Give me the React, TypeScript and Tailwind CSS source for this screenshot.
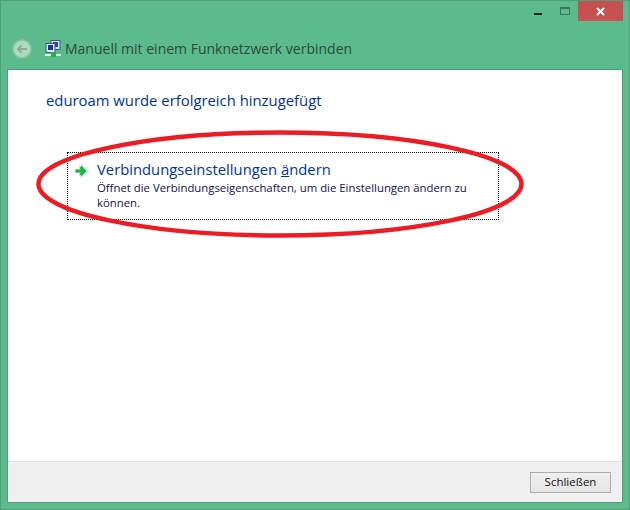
export default function App() {
  return (
    <div className="relative flex h-[510px] w-[630px] flex-col overflow-hidden border border-[#4e9f78] bg-[#5cbb8d] font-['Open_Sans','Noto_Sans',sans-serif]">
      <div className="flex h-[20px] shrink-0 items-start justify-end pr-[6px]">
        <div className="mt-[12px] h-[2px] w-[8px] bg-[#222]" />
        <div className="ml-[18px] mt-[6px] h-[8px] w-[10px] border border-t-2 border-[#46705c]" />
        <div className="ml-[8px] flex h-[20px] w-[45px] items-center justify-center bg-[#c75050]">
          <svg width="9" height="9" viewBox="0 0 9 9"><path d="M1 1l7 7M8 1l-7 7" stroke="#fff" strokeWidth="2" /></svg>
        </div>
      </div>
      <div className="flex h-[48px] shrink-0 items-center pl-[11px] pt-[7px]">
        <svg width="20" height="20" viewBox="0 0 20 20">
          <circle cx="10" cy="10" r="9" fill="#a9dcc3" stroke="#8ebfa7" strokeWidth="1.5" />
          <path d="M15 10H6M9.5 6.5L6 10l3.5 3.5" fill="none" stroke="#8aa99a" strokeWidth="2" />
        </svg>
        <svg className="ml-[13px]" width="17" height="18" viewBox="0 0 17 18">
          <rect x="6" y="0.5" width="9" height="9" fill="#d8e4f4" stroke="#44587c" />
          <rect x="8" y="2" width="5" height="5" fill="#2340b0" />
          <rect x="1" y="3.5" width="9" height="9" fill="#e4ecf6" stroke="#44587c" />
          <rect x="3" y="5" width="5" height="5" fill="#1a2fa8" />
          <rect x="0" y="14" width="16" height="2" fill="#e6efe6" />
          <rect x="6" y="12" width="5" height="5" fill="#22b14c" />
        </svg>
        <span className="ml-[3px] whitespace-nowrap text-[14px] text-[#2b4a3b]">Manuell mit einem Funknetzwerk verbinden</span>
      </div>
      <div className="mx-[6px] mb-[6px] flex min-h-0 flex-1 flex-col border border-[#4e9f78] bg-white">
        <div className="flex-1 pl-[38px] pt-[19px]">
          <div className="whitespace-nowrap text-[14.85px] leading-[22px] text-[#003399]">eduroam wurde erfolgreich hinzugefügt</div>
          <div className="ml-[21px] mt-[41px] flex h-[68px] w-[432px] border border-dotted border-black pl-[6px] pt-[6px]">
            <svg className="mt-[5px]" width="14" height="14" viewBox="0 0 14 14">
              <path d="M0.5 7h7M6 1.5L12 7l-6 5.5" fill="none" stroke="#d3ecd6" strokeWidth="4.5" />
              <path d="M1.5 7h8M6.5 3l4 4-4 4" fill="none" stroke="#1fb24a" strokeWidth="3" />
            </svg>
            <div className="ml-[9px]">
              <div className="whitespace-nowrap text-[14.8px] leading-[21px] text-[#003399]">
                Verbindungseinstellungen <span className="underline">ä</span>ndern
              </div>
              <div className="w-[385px] text-[11.35px] leading-[15px] text-[#12104f]">
                Öffnet die Verbindungseigenschaften, um die Einstellungen ändern zu können.
              </div>
            </div>
          </div>
        </div>
        <div className="flex h-[41px] shrink-0 items-center justify-end border-t border-[#dfdfdf] bg-[#f0f0f0] pr-[11px]">
          <button className="h-[21px] w-[81px] border border-[#acacac] bg-[linear-gradient(#f0f0f0,#e5e5e5)] pb-[2px] text-[11.5px] leading-[17px] text-[#111]">Schließen</button>
        </div>
      </div>
      <svg className="pointer-events-none absolute left-[-1px] top-[-1px]" width="630" height="510" viewBox="0 0 630 510">
        <ellipse cx="280" cy="184" rx="241.5" ry="51.5" fill="none" stroke="#ed1c24" strokeWidth="4.5" />
      </svg>
    </div>
  );
}
